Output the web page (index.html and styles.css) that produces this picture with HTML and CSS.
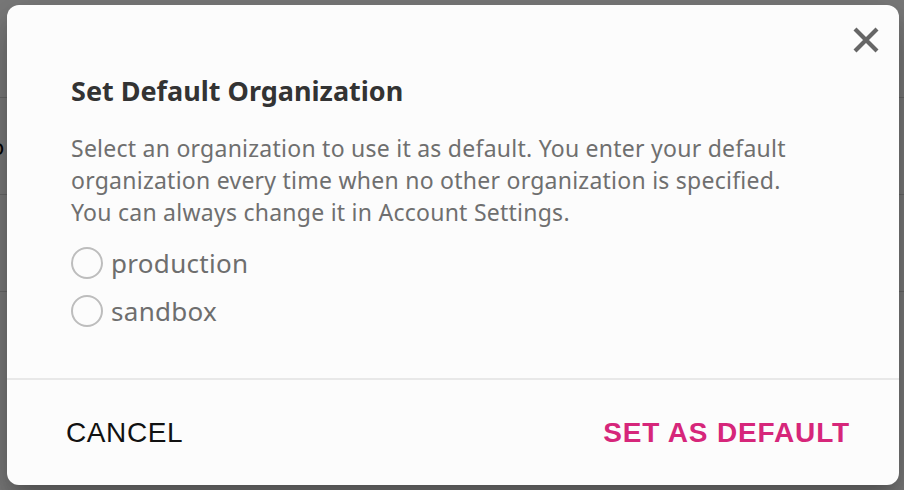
FILE: index.html
```html
<!DOCTYPE html>
<html>
<head>
<meta charset="utf-8">
<link rel="stylesheet" href="styles.css">
</head>
<body>
<div class="page">
  <div class="bg-rows">
    <div class="bg-row"><span class="bg-text">o</span></div>
    <div class="bg-row"></div>
    <div class="bg-row"></div>
  </div>
</div>
<div class="backdrop"></div>
<div class="dialog">
  <button class="close" aria-label="Close">
    <svg width="28" height="28" viewBox="0 0 28 28"><path d="M3 3 L25 25 M25 3 L3 25" stroke="#666" stroke-width="4.2" stroke-linecap="butt"/></svg>
  </button>
  <div class="content">
    <h2 class="title">Set Default Organization</h2>
    <p class="desc">Select an organization to use it as default. You enter your default organization every time when no other organization is specified. You can always change it in Account Settings.</p>
    <div class="options">
      <label class="option"><span class="radio"></span><span class="opt-label">production</span></label>
      <label class="option"><span class="radio"></span><span class="opt-label">sandbox</span></label>
    </div>
  </div>
  <div class="footer">
    <button class="btn cancel">CANCEL</button>
    <button class="btn primary">SET AS DEFAULT</button>
  </div>
</div>
</body>
</html>
```
FILE: styles.css
```css
html, body {
  margin: 0;
  padding: 0;
  width: 904px;
  height: 490px;
  overflow: hidden;
  font-family: "Noto Sans", "Open Sans", sans-serif;
}
.page {
  width: 904px;
  height: 490px;
  background: #ffffff;
}
.bg-rows {
  padding-top: 97px;
}
.bg-row {
  height: 96px;
  border-top: 1px solid #d8d8d8;
}
.bg-text {
  display: inline-block;
  font-size: 22px;
  color: #000;
  margin-left: -9px;
  line-height: 96px;
}
.backdrop {
  position: absolute;
  inset: 0;
  background: rgba(0, 0, 0, 0.52);
}
.dialog {
  position: absolute;
  left: 7px;
  top: 5px;
  width: 892px;
  height: 480px;
  background: #fcfcfc;
  border-radius: 12px;
  display: flex;
  flex-direction: column;
  box-shadow: 0 11px 15px -7px rgba(0,0,0,0.2), 0 24px 38px 3px rgba(0,0,0,0.14), 0 9px 46px 8px rgba(0,0,0,0.12);
}
.close {
  position: absolute;
  right: 19px;
  top: 21px;
  padding: 0;
  border: none;
  background: none;
  width: 28px;
  height: 28px;
}
.content {
  flex: 1;
  padding: 70px 64px 0 64px;
}
.title {
  margin: 0;
  font-size: 27px;
  font-weight: 700;
  color: #333333;
  line-height: 32px;
}
.desc {
  margin: 25px 0 0 0;
  font-size: 23px;
  letter-spacing: 0.25px;
  line-height: 32px;
  color: #6f6f6f;
  width: 728px;
}
.options {
  margin-top: 19px;
  display: flex;
  flex-direction: column;
  gap: 16px;
}
.option {
  display: flex;
  align-items: center;
  gap: 8px;
  height: 32px;
}
.radio {
  width: 28px;
  height: 28px;
  border: 2px solid #bdbdbd;
  border-radius: 50%;
  flex: none;
}
.opt-label {
  font-size: 26px;
  letter-spacing: 0.3px;
  color: #6e6e6e;
}
.footer {
  height: 105px;
  border-top: 2px solid #e8e8e8;
  display: flex;
  justify-content: space-between;
  align-items: center;
  padding: 0 49px 0 59px;
}
.btn {
  border: none;
  background: none;
  padding: 0;
  font-family: "Liberation Sans", Arial, sans-serif;
  font-size: 28px;
}
.cancel {
  color: #111111;
  font-weight: 400;
  letter-spacing: 0.6px;
}
.primary {
  color: #d6267a;
  font-weight: 700;
  letter-spacing: 0.85px;
}
```
